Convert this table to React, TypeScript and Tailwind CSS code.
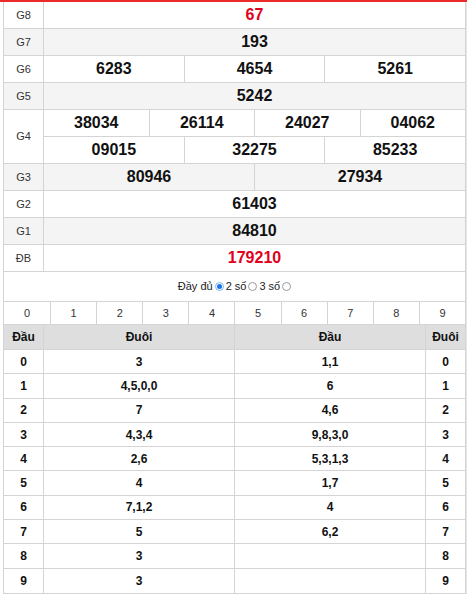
const rows: { label: string; values: string[][]; red?: boolean; gray?: boolean }[] = [
  { label: 'G8', values: [['67']], red: true },
  { label: 'G7', values: [['193']], gray: true },
  { label: 'G6', values: [['6283', '4654', '5261']] },
  { label: 'G5', values: [['5242']], gray: true },
  { label: 'G4', values: [['38034', '26114', '24027', '04062'], ['09015', '32275', '85233']] },
  { label: 'G3', values: [['80946', '27934']], gray: true },
  { label: 'G2', values: [['61403']] },
  { label: 'G1', values: [['84810']], gray: true },
  { label: 'ĐB', values: [['179210']], red: true },
];

const dauDuoi: [string, string, string, string][] = [
  ['0', '3', '1,1', '0'],
  ['1', '4,5,0,0', '6', '1'],
  ['2', '7', '4,6', '2'],
  ['3', '4,3,4', '9,8,3,0', '3'],
  ['4', '2,6', '5,3,1,3', '4'],
  ['5', '4', '1,7', '5'],
  ['6', '7,1,2', '4', '6'],
  ['7', '5', '6,2', '7'],
  ['8', '3', '', '8'],
  ['9', '3', '', '9'],
];

function Radio({ checked }: { checked?: boolean }) {
  if (checked) {
    return (
      <span className="inline-flex h-[9px] w-[9px] items-center justify-center rounded-full border border-[#7fb2f0] bg-white">
        <span className="h-[5px] w-[5px] rounded-full bg-[#1a73e8]" />
      </span>
    );
  }
  return <span className="inline-block h-[9px] w-[9px] rounded-full border border-[#9a9a9a] bg-white" />;
}

export default function App() {
  return (
    <div className="w-[467px] bg-white font-['Liberation_Sans',Arial,sans-serif] text-[#111]">
      <div className="h-[2px] w-full bg-[#ee2a2a]" />
      <div className="ml-[3px] w-[463px] border-x border-b border-[#d4d4d4] shadow-[1px_1px_2px_rgba(0,0,0,0.15)]">
        {/* result table */}
        <div>
          {rows.map((row) => (
            <div
              key={row.label}
              className={`flex border-b border-[#d4d4d4] ${row.gray ? 'bg-[#f4f4f4]' : 'bg-white'}`}
            >
              <div className="flex w-[40px] shrink-0 items-center justify-center border-r border-[#d4d4d4] text-[11px] text-[#333]">
                {row.label}
              </div>
              <div className="flex flex-1 flex-col">
                {row.values.map((line, li) => (
                  <div
                    key={li}
                    className={`flex h-[26px] ${li > 0 ? 'h-[27px] border-t border-[#d4d4d4]' : ''}`}
                  >
                    {line.map((v, vi) => (
                      <div
                        key={v}
                        className={`flex flex-1 items-center justify-center text-[16px] font-bold ${
                          vi > 0 ? 'border-l border-[#d4d4d4]' : ''
                        } ${row.red ? 'text-[#e2001a]' : 'text-[#111]'}`}
                      >
                        {v}
                      </div>
                    ))}
                  </div>
                ))}
              </div>
            </div>
          ))}
        </div>

        {/* options */}
        <div className="flex h-[29px] items-center justify-center gap-[2px] text-[11px] text-[#222]">
          <span>Đầy đủ</span>
          <Radio checked />
          <span>2 số</span>
          <Radio />
          <span>3 số</span>
          <Radio />
        </div>

        {/* digit filter */}
        <div className="grid grid-cols-10 border-t border-[#d4d4d4]">
          {['0', '1', '2', '3', '4', '5', '6', '7', '8', '9'].map((d, i) => (
            <div
              key={d}
              className={`flex h-[22px] items-center justify-center text-[11px] text-[#333] ${
                i > 0 ? 'border-l border-[#d4d4d4]' : ''
              }`}
            >
              {d}
            </div>
          ))}
        </div>

        {/* dau duoi */}
        <div className="flex h-[26px] border-y border-[#d4d4d4] bg-[#dedede] text-[12px] font-bold">
          <div className="flex w-[40px] items-center justify-center border-r border-[#d4d4d4]">Đầu</div>
          <div className="flex w-[191px] items-center justify-center border-r border-[#d4d4d4]">Đuôi</div>
          <div className="flex w-[191px] items-center justify-center border-r border-[#d4d4d4]">Đầu</div>
          <div className="flex flex-1 items-center justify-center">Đuôi</div>
        </div>
        {dauDuoi.map((r, i) => (
          <div
            key={r[0]}
            className={`flex h-[24.3px] text-[12px] font-bold ${i < dauDuoi.length - 1 ? 'border-b border-[#d4d4d4]' : ''}`}
          >
            <div className="flex w-[40px] items-center justify-center border-r border-[#d4d4d4]">{r[0]}</div>
            <div className="flex w-[191px] items-center justify-center border-r border-[#d4d4d4]">{r[1]}</div>
            <div className="flex w-[191px] items-center justify-center border-r border-[#d4d4d4]">{r[2]}</div>
            <div className="flex flex-1 items-center justify-center">{r[3]}</div>
          </div>
        ))}
      </div>
    </div>
  );
}
